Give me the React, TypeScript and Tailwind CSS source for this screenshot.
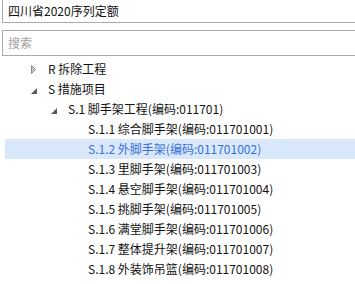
import React from "react";

type Row = { level: number; text: string; arrow?: "open" | "closed"; selected?: boolean };

const rows: Row[] = [
  { level: 0, text: "R 拆除工程", arrow: "closed" },
  { level: 0, text: "S 措施项目", arrow: "open" },
  { level: 1, text: "S.1 脚手架工程(编码:011701)", arrow: "open" },
  { level: 2, text: "S.1.1 综合脚手架(编码:011701001)" },
  { level: 2, text: "S.1.2 外脚手架(编码:011701002)", selected: true },
  { level: 2, text: "S.1.3 里脚手架(编码:011701003)" },
  { level: 2, text: "S.1.4 悬空脚手架(编码:011701004)" },
  { level: 2, text: "S.1.5 挑脚手架(编码:011701005)" },
  { level: 2, text: "S.1.6 满堂脚手架(编码:011701006)" },
  { level: 2, text: "S.1.7 整体提升架(编码:011701007)" },
  { level: 2, text: "S.1.8 外装饰吊篮(编码:011701008)" },
];

function Closed() {
  return (
    <svg width="6" height="9" viewBox="0 0 6 9">
      <polygon points="0.5,0.5 4.5,4.5 0.5,8.5" fill="#c8c8c8" stroke="#8a8a8a" strokeWidth="1" />
    </svg>
  );
}

function Open() {
  return (
    <svg width="7" height="7" viewBox="0 0 7 7" className="mt-[4px]">
      <polygon points="6,0 6,6 0,6" fill="#595959" />
    </svg>
  );
}

const pad: Record<number, string> = { 0: "pl-[23px]", 1: "pl-[43px]", 2: "pl-[63px]" };

export default function App() {
  return (
    <div
      className="relative w-[355px] h-[284px] bg-white overflow-hidden text-[12px] text-[#111]"
      style={{ fontFamily: '"Noto Sans CJK SC", "Noto Sans", sans-serif' }}
    >
      <div className="ml-[2px] mt-[-3px] w-[360px] h-[26px] border border-[#a9a9a9] flex items-center pl-[5px] pt-[1px] leading-none">
        四川省2020序列定额
      </div>
      <div className="ml-[2px] mt-[7px] w-[360px] h-[26px] border border-[#a9a9a9] flex items-center pl-[5px] leading-none text-[#a0a0a0]">
        搜索
      </div>
      <div className="mt-[3px]">
        {rows.map((r, i) => (
          <div
            key={i}
            className={`ml-[5px] h-5 flex items-center leading-none ${pad[r.level]} ${
              r.selected ? "bg-[#dae8fc] text-[#3670d6]" : ""
            }`}
          >
            <div className="w-5 h-5 flex items-center pl-[3px]">
              {r.arrow === "closed" ? <Closed /> : r.arrow === "open" ? <Open /> : null}
            </div>
            <span className="whitespace-nowrap">{r.text}</span>
          </div>
        ))}
      </div>
    </div>
  );
}
